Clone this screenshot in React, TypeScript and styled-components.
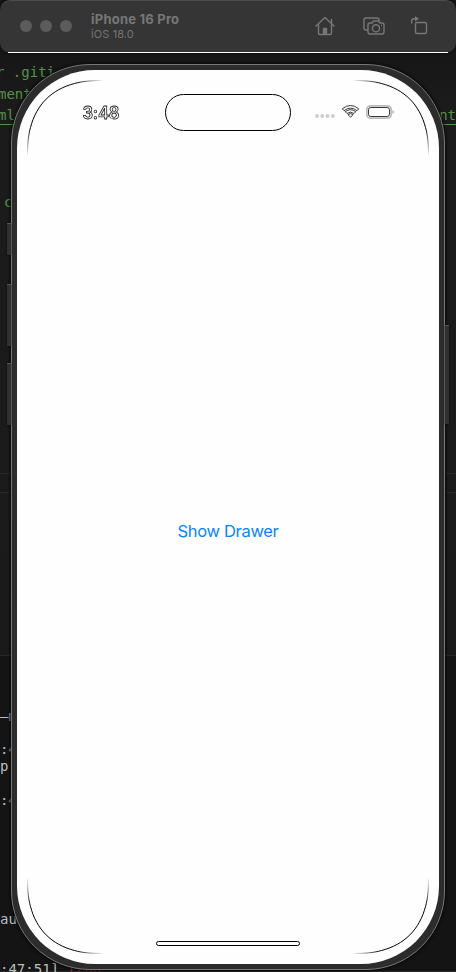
import React from "react";
import styled, { createGlobalStyle } from "styled-components";

const Global = createGlobalStyle`
  * { box-sizing: border-box; }
  body { margin: 0; background: #151515; overflow: hidden; }
`;

const Desktop = styled.main`
  position: relative;
  width: 456px;
  height: 972px;
  overflow: hidden;
  display: flex;
  flex-direction: column;
  background: linear-gradient(#151515 0, #171717 62px, #1b1b1b 110px, #1a1a1a 655px, #141414 656px);
  font-family: Inter, "Liberation Sans", sans-serif;
`;

const Editor = styled.div`
  position: absolute;
  inset: 0;
  display: flex;
  flex-direction: column;
  font: 14px/20px "DejaVu Sans Mono", monospace;
  color: #bdbdbd;
`;

const Pane = styled.div<{ $height: number; $top?: number }>`
  flex: none;
  height: ${(p) => p.$height}px;
  padding-top: ${(p) => p.$top ?? 0}px;
  border-bottom: 1px solid #292929;
`;

const Code = styled.div<{ $row: number; $indent?: number }>`
  height: ${(p) => p.$row}px;
  display: flex;
  justify-content: space-between;
  white-space: pre;
  text-indent: ${(p) => p.$indent ?? 0}px;
`;

const Comment = styled.span<{ $link?: boolean }>`
  height: 20px;
  color: #569149;
  border-bottom: ${(p) => (p.$link ? "1px solid #569149" : "0")};
`;

const ErrorText = styled.span`
  color: #a02b2b;
`;

const TitleBar = styled.header`
  position: relative;
  flex: none;
  height: 53px;
  display: flex;
  align-items: center;
  padding: 0 28px 2px 20px;
  border-radius: 10px;
  background: #353535;
  border-top: 1px solid #4c4c4c;
  box-shadow: 0 0 2px #000;
  color: #777;
  &::after {
    content: "";
    position: absolute;
    left: 8px;
    right: 8px;
    bottom: 0;
    height: 1px;
    background: #fff;
  }
`;

const Lights = styled.div`
  display: flex;
  gap: 8px;
  margin-right: 19px;
`;

const Light = styled.i`
  width: 12px;
  height: 12px;
  border-radius: 50%;
  background: #5c5c5c;
`;

const Device = styled.div`
  flex: 1;
  padding-top: 1px;
`;

const DeviceName = styled.div`
  font-size: 13px;
  font-weight: 700;
  line-height: 15px;
  letter-spacing: 0.22px;
`;

const DeviceOs = styled.div`
  font-size: 11px;
  line-height: 14px;
  letter-spacing: 0.1px;
  color: #747474;
`;

const Tools = styled.div`
  display: grid;
  grid-template-columns: 20px 22px 18px;
  align-items: center;
  column-gap: 28px;
  margin-left: -2px;
  > :last-child { margin-left: -3px; }
  margin-right: -3px;
`;

const Phone = styled.section`
  position: relative;
  align-self: flex-start;
  width: 434px;
  height: 906px;
  margin: 11px 0 0 11px;
  padding: 5px;
  border: 1px solid #777;
  border-radius: 79px;
  background: #2c2c2c;
  box-shadow: 0 0 3px 1px #080808;
`;

const SideButton = styled.i<{ $y: number; $h: number; $right?: boolean }>`
  position: absolute;
  ${(p) => (p.$right ? "right: -5px;" : "left: -5px;")}
  top: ${(p) => p.$y}px;
  width: 4px;
  height: ${(p) => p.$h}px;
  background: #303030;
  border-top: 1px solid #555;
  box-shadow: 0 0 2px #050505;
`;

const Screen = styled.div`
  height: 100%;
  border-radius: 78px;
  overflow: hidden;
  background: #fefefe;
  display: grid;
  grid-template: 1fr / 1fr;
  > * { grid-area: 1 / 1; }
`;

const Corners = styled.svg`
  place-self: center;
`;

const Display = styled.div`
  display: flex;
  flex-direction: column;
  padding: 24px 0 18px;
`;

const StatusBar = styled.div`
  flex: none;
  height: 37px;
  display: grid;
  grid-template-columns: 148px 126px 1fr;
  align-items: center;
`;

const Clock = styled.time`
  padding: 1px 0 0 65.5px;
  font-size: 16.7px;
  font-weight: 600;
  line-height: 20px;
  letter-spacing: -0.25px;
  color: #fefefe;
  -webkit-text-stroke: 0.8px #222;
  will-change: transform;
`;

const Island = styled.div`
  height: 37px;
  border: 1px solid #000;
  border-radius: 19px;
`;

const Status = styled.div`
  display: flex;
  padding: 0 0 2px 23px;
`;

const Content = styled.div`
  flex: 1;
  display: flex;
  align-items: center;
  justify-content: center;
`;

const DrawerButton = styled.button`
  padding: 0;
  border: 0;
  background: none;
  color: #0a84ff;
  font: 16.5px/24px Inter, sans-serif;
  letter-spacing: -0.33px;
  margin-bottom: 11px;
`;

const HomeIndicator = styled.div`
  flex: none;
  align-self: center;
  width: 144px;
  height: 5px;
  border: 1px solid #000;
  border-radius: 3px;
`;

const corner = "M0 76C0 62 1 54 3 47C9 24 24 9 47 3C54 1 62 0 76 0";

export default function App() {
  return (
    <Desktop>
      <Global />
      <Editor>
        <Pane $height={474} $top={62}>
          <Code $row={22} $indent={-4}><Comment>r .giti</Comment></Code>
          <Code $row={21} $indent={-2}><Comment>ment</Comment></Code>
          <Code $row={87} $indent={-2}>
            <Comment $link>ml#</Comment>
            <Comment $link>nt</Comment>
          </Code>
          <Code $row={20} $indent={4}><Comment>c</Comment></Code>
        </Pane>
        <Pane $height={19} />
        <Pane $height={163} />
        <Pane $height={316} $top={50}>
          <Code $row={33}>—m</Code>
          <Code $row={17}>:4</Code>
          <Code $row={34}>p</Code>
          <Code $row={119}>:4</Code>
          <Code $row={50}>au</Code>
          <Code $row={20}><span>:47:51] <ErrorText>[run</ErrorText></span></Code>
        </Pane>
      </Editor>

      <TitleBar>
        <Lights><Light /><Light /><Light /></Lights>
        <Device>
          <DeviceName>iPhone 16 Pro</DeviceName>
          <DeviceOs>iOS 18.0</DeviceOs>
        </Device>
        <Tools>
          <svg width="20" height="20" viewBox="0 0 20 20" fill="none" stroke="#777" strokeWidth="1.4" strokeLinejoin="round" strokeLinecap="round">
            <path d="M1 10 10 1.500 19 10M3.500 8.500V17Q3.500 18.500 5 18.500H15Q16.500 18.500 16.500 17V8.500M16.500 7V3.500" />
            <path d="M8.500 18v-5.500h3V18z" fill="#777" />
          </svg>
          <svg width="22" height="20" viewBox="0 0 22 20" fill="none" stroke="#777" strokeWidth="1.4" strokeLinejoin="round">
            <path d="M5 14H3Q1 14 1 12V4Q1 2 3 2H14Q16 2 16 4V5" />
            <path d="M7 7H9L10.500 5H15.500L17 7H19Q21 7 21 9V16Q21 18 19 18H7Q5 18 5 16V9Q5 7 7 7Z" />
            <circle cx="13" cy="12.300" r="3.600" />
            <path d="M18 9.500h1" />
          </svg>
          <svg width="18" height="20" viewBox="0 0 18 20" fill="none" stroke="#777" strokeWidth="1.4">
            <rect x="5.500" y="6.500" width="11" height="11" rx="1.500" />
            <path d="M1.700 7.500V5Q1.700 2.700 4 2.700H6" />
            <path d="M5 0 9 2.700 5 5.500Z" fill="#777" stroke="none" />
          </svg>
        </Tools>
      </TitleBar>

      <Phone>
        <SideButton $y={158} $h={32} />
        <SideButton $y={219} $h={62} />
        <SideButton $y={298} $h={62} />
        <SideButton $y={260} $h={99} $right />
        <Screen>
          <Corners width="402" height="874" fill="none">
            <defs>
              <linearGradient id="fade" gradientUnits="userSpaceOnUse" x1="0" y1="76" x2="76" y2="0">
                <stop offset="0" stopOpacity="0" />
                <stop offset=".2" stopOpacity="1" />
                <stop offset=".8" stopOpacity="1" />
                <stop offset="1" stopOpacity="0" />
              </linearGradient>
            </defs>
            <g stroke="url(#fade)">
              <path d={corner} transform="translate(.5 .5)" />
              <path d={corner} transform="translate(401.5 .5) scale(-1 1)" />
              <path d={corner} transform="translate(.5 873.5) scale(1 -1)" />
              <path d={corner} transform="translate(401.5 873.5) scale(-1 -1)" />
            </g>
          </Corners>
          <Display>
            <StatusBar>
              <Clock>3:48</Clock>
              <Island />
              <Status>
                <svg width="82" height="20" viewBox="0 0 82 20" fill="none">
                  <g fill="#ccc">
                    <circle cx="3" cy="14" r="1.900" /><circle cx="8.300" cy="14" r="1.900" />
                    <circle cx="13.600" cy="14" r="1.900" /><circle cx="18.900" cy="14" r="1.900" />
                  </g>
                  <g stroke="#222" strokeWidth=".9" strokeLinejoin="round">
                    <path d="M28.300 6.800Q36.500 .2 44.700 6.800L43 8.700Q36.500 3.500 30 8.700Z" />
                    <path d="M31.200 9.700Q36.500 5.700 41.800 9.700L40 11.500Q36.500 8.700 33 11.500Z" />
                    <path d="M34 12.600Q36.500 10.600 39 12.600L36.500 15.300Z" />
                  </g>
                  <rect x="52.800" y="3.800" width="24.400" height="12.400" rx="3.800" stroke="#bbb" strokeWidth="1.700" />
                  <rect x="54.500" y="5.500" width="21" height="9" rx="2.300" stroke="#222" strokeWidth=".9" />
                  <path d="M78.500 8Q81.500 10 78.500 12Z" fill="#aaa" />
                </svg>
              </Status>
            </StatusBar>
            <Content><DrawerButton>Show Drawer</DrawerButton></Content>
            <HomeIndicator />
          </Display>
        </Screen>
      </Phone>
    </Desktop>
  );
}
